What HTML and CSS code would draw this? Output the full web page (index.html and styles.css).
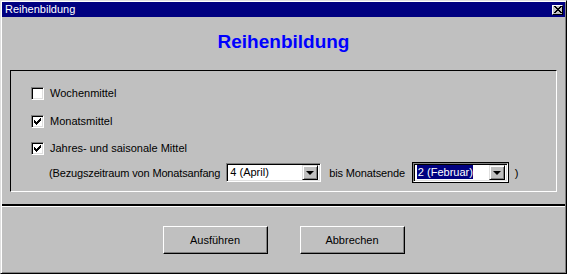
FILE: index.html
```html
<!DOCTYPE html>
<html>

<head>
  <meta charset="utf-8">
  <title>Reihenbildung</title>
  <link rel="stylesheet" href="styles.css">
</head>

<body>
  <div class="window">
    <div class="titlebar">
      <span class="title">Reihenbildung</span>
      <span class="close">
        <svg width="8" height="7" viewBox="0 0 8 7">
          <path d="M0 0h2v1h1v1h2v-1h1v-1h2v1h-1v1h-1v1h-1v1h1v1h1v1h1v1h-2v-1h-1v-1h-2v1h-1v1h-2v-1h1v-1h1v-1h1v-1h-1v-1h-1v-1h-1z" fill="#000"/>
        </svg>
      </span>
    </div>

    <h1>Reihenbildung</h1>

    <div class="group">
      <label class="row row1">
        <span class="check"></span>
        Wochenmittel
      </label>
      <label class="row row2">
        <span class="check">
          <svg width="7" height="7" viewBox="0 0 7 7"><path d="M0 2h1v1h1v1h1v-1h1v-1h1v-1h1v-1h1v3h-1v1h-1v1h-1v1h-1v1h-1v-1h-1v-1h-1z" fill="#000"/></svg>
        </span>
        Monatsmittel
      </label>
      <label class="row row3">
        <span class="check">
          <svg width="7" height="7" viewBox="0 0 7 7"><path d="M0 2h1v1h1v1h1v-1h1v-1h1v-1h1v-1h1v3h-1v1h-1v1h-1v1h-1v1h-1v-1h-1v-1h-1z" fill="#000"/></svg>
        </span>
        Jahres- und saisonale Mittel
      </label>
      <div class="range">
        <span class="lbl">(Bezugszeitraum von Monatsanfang</span>
        <span class="combo">
          <span class="value">4 (April)</span>
          <span class="drop"><span class="arrow"></span></span>
        </span>
        <span class="lbl bis">bis Monatsende</span>
        <span class="focus">
          <span class="combo">
            <span class="value"><span class="sel">2 (Februar)</span></span>
            <span class="drop"><span class="arrow"></span></span>
          </span>
        </span>
        <span class="lbl paren">)</span>
      </div>
    </div>

    <div class="separator"></div>

    <div class="actions">
      <button type="button">Ausführen</button>
      <button type="button">Abbrechen</button>
    </div>
  </div>
</body>

</html>
```

FILE: styles.css
```css
body {
  margin: 0;
  background: #c0c0c0;
  font-family: "Liberation Sans", Arial, sans-serif;
  font-size: 11px;
  color: #000;
}

.window {
  box-sizing: border-box;
  width: 567px;
  height: 274px;
  padding: 1px;
  background: #c0c0c0;
  border: 1px solid;
  border-color: #dfdfdf #000 #000 #dfdfdf;
  box-shadow: inset 1px 1px #fff, inset -1px -1px #808080;
}

.titlebar {
  height: 15px;
  background: #000080;
  display: flex;
  align-items: center;
  justify-content: space-between;
  padding: 0 2px 0 3px;
}

.title {
  color: #fff;
  font-size: 11px;
  line-height: 15px;
}

.close {
  box-sizing: border-box;
  width: 11px;
  height: 10px;
  background: #c0c0c0;
  border: 1px solid;
  border-color: #fff #000 #000 #fff;
  display: flex;
  align-items: center;
  justify-content: center;
}

.close svg {
  display: block;
}

h1 {
  margin: 14px 0 0;
  height: 22px;
  line-height: 22px;
  font-size: 19px;
  font-weight: bold;
  color: #0000ff;
  text-align: center;
}

.group {
  margin: 17px 8px 0;
  padding: 16px 0 8px 20px;
  border: 1px solid;
  border-color: #000 #fff #fff #000;
}

.row {
  display: flex;
  align-items: center;
  height: 13px;
  line-height: 13px;
}

.row1 {
  margin-bottom: 15px;
}

.row2 {
  margin-bottom: 14px;
}

.row3 {
  margin-bottom: 7px;
}

.check {
  box-sizing: border-box;
  width: 13px;
  height: 13px;
  margin-right: 6px;
  background: #fff;
  border: 1px solid;
  border-color: #808080 #fff #fff #808080;
  box-shadow: inset 1px 1px #000, inset -1px -1px #dfdfdf;
  display: flex;
  align-items: center;
  justify-content: center;
}

.check svg {
  display: block;
}

.range {
  display: flex;
  align-items: center;
  height: 21px;
  padding-left: 18px;
}

.lbl {
  margin-right: 6px;
  letter-spacing: -0.15px;
}

.bis {
  margin-left: 8px;
  margin-right: 7px;
}

.paren {
  margin-left: 6px;
}

.combo {
  box-sizing: border-box;
  width: 95px;
  height: 19px;
  padding: 2px;
  background: #fff;
  border: 1px solid;
  border-color: #808080 #fff #fff #808080;
  box-shadow: inset 1px 1px #000, inset -1px -1px #dfdfdf;
  display: flex;
  align-items: center;
}

.focus {
  border: 1px solid #000;
  display: flex;
}

.value {
  flex: 1;
  height: 15px;
  line-height: 15px;
  padding-left: 1px;
  overflow: hidden;
  white-space: nowrap;
}

.sel {
  background: #000080;
  color: #fff;
  padding: 1px 0 1px 1px;
}

.drop {
  box-sizing: border-box;
  width: 16px;
  height: 15px;
  background: #c0c0c0;
  border: 1px solid;
  border-color: #dfdfdf #000 #000 #dfdfdf;
  box-shadow: inset 1px 1px #fff, inset -1px -1px #808080;
  display: flex;
  align-items: center;
  justify-content: center;
}

.arrow {
  width: 0;
  height: 0;
  border-left: 4px solid transparent;
  border-right: 4px solid transparent;
  border-top: 4px solid #000;
}

.separator {
  margin-top: 12px;
  border-top: 2px solid #000;
  border-bottom: 1px solid #fff;
}

.actions {
  display: flex;
  justify-content: center;
  gap: 32px;
  margin-top: 19px;
}

.actions button {
  box-sizing: border-box;
  width: 105px;
  height: 28px;
  padding: 0;
  font-family: "Liberation Sans", Arial, sans-serif;
  font-size: 11px;
  color: #000;
  background: #c0c0c0;
  border: 1px solid;
  border-color: #fff #000 #000 #fff;
  box-shadow: inset -1px -1px #808080;
}
```
